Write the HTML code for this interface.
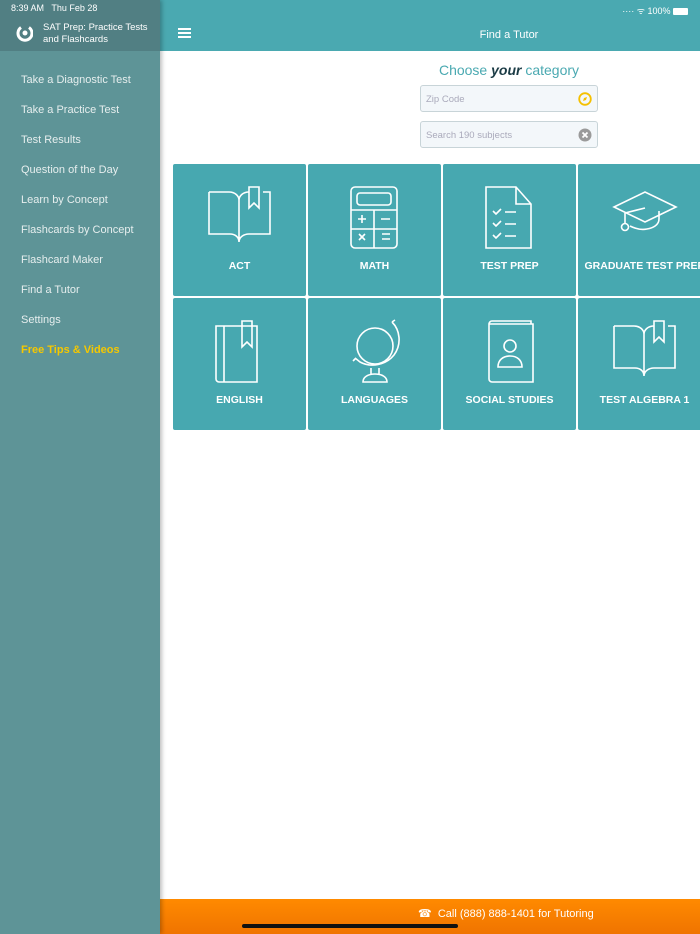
<!DOCTYPE html>
<html><head><meta charset="utf-8"><style>
*{margin:0;padding:0;box-sizing:border-box}
body{width:700px;height:934px;overflow:hidden;background:#fff;font-family:"Liberation Sans",sans-serif;position:relative}
#side{position:absolute;left:0;top:0;width:160px;height:934px;background:#5e9497;box-shadow:2px 0 4px rgba(0,0,0,.25);z-index:2}
#sidehead{height:51px;background:#517f83;position:relative}
#sidehead .t{position:absolute;left:11px;top:3px;font-size:9px;color:#fff}
#sidehead .n{position:absolute;left:43px;top:22px;font-size:9.5px;line-height:12px;color:#fff}
#side ul{list-style:none;padding-left:21px;margin-top:23px}
#side li{font-size:11px;color:#e6eeee;height:30px}
#side li.y{color:#f5c800;font-weight:bold}
#top{position:absolute;left:160px;top:0;right:0;height:51px;background:#4aa9b1}
#top .h{position:absolute;top:35px;left:349px;transform:translate(-50%,-50%);color:#fff;font-size:11px;white-space:nowrap}
.ham{position:absolute;left:18px;top:28px;width:13px;height:2px;background:#fff;box-shadow:0 4px 0 #fff,0 8px 0 #fff}
#stat{position:absolute;right:12px;top:4px;font-size:9px;color:#fff}
h2{position:absolute;left:420px;width:178px;top:62px;text-align:center;font-weight:normal;font-size:14px;color:#4aa9b1}
h2 b{color:#1b3b45;font-style:italic}
.in{position:absolute;left:420px;width:178px;height:27px;border:1px solid #c8d4d8;border-radius:3px;background:#f3f7fa;font-size:9.5px;color:#aab;padding:8px 0 0 5px}
.tile{position:absolute;width:133px;height:132px;background:#47a8b0;border-radius:2px;color:#fff;text-align:center}
.tile svg{position:absolute;left:33px;top:20px}
.tile span{position:absolute;top:96px;left:0;right:0;font-size:10.5px;font-weight:bold;white-space:nowrap}
#bot{position:absolute;left:160px;right:0;top:899px;height:35px;background:linear-gradient(#ff8a00,#f07400);color:#fff;font-size:11px}
#bot span{position:absolute;left:258px;top:8px}
#bar{position:absolute;left:242px;top:924px;width:216px;height:4px;border-radius:2px;background:#111;z-index:3}
</style></head><body>
<div id="side">
 <div id="sidehead"><div class="t">8:39 AM &nbsp; Thu Feb 28</div>
 <svg style="position:absolute;left:16px;top:25px" width="17" height="17" viewBox="0 0 17 17"><path d="M5 2.5A7 7 0 1 0 13 2.5" fill="none" stroke="#fff" stroke-width="3"/><circle cx="9" cy="8" r="2.5" fill="#fff"/></svg>
 <div class="n">SAT Prep: Practice Tests<br>and Flashcards</div></div>
 <ul><li>Take a Diagnostic Test</li><li>Take a Practice Test</li><li>Test Results</li><li>Question of the Day</li><li>Learn by Concept</li><li>Flashcards by Concept</li><li>Flashcard Maker</li><li>Find a Tutor</li><li>Settings</li><li class="y">Free Tips &amp; Videos</li></ul>
</div>
<div id="top"><div class="ham"></div><div class="h">Find a Tutor</div><div id="stat">···· ᯤ 100% <span style="display:inline-block;width:15px;height:7px;background:#fff;border-radius:1px;vertical-align:-1px"></span></div></div>
<h2>Choose <b>your</b> category</h2>
<div class="in" style="top:85px">Zip Code<svg style="position:absolute;right:5px;top:6px" width="14" height="14"><circle cx="7" cy="7" r="5.8" fill="none" stroke="#f5c000" stroke-width="1.8"/><path d="M9 5L6 6 5 9 8 8z" fill="#f5c000"/></svg></div>
<div class="in" style="top:121px">Search 190 subjects<svg style="position:absolute;right:5px;top:6px" width="14" height="14"><circle cx="7" cy="7" r="6.5" fill="#9a9a9a"/><path d="M4.5 4.5l5 5M9.5 4.5l-5 5" stroke="#fff" stroke-width="1.8"/></svg></div>

<div class="tile" style="left:173px;top:164px"><svg width="68" height="68" viewBox="0 0 68 68" fill="none" stroke="#fff" stroke-width="1.6"><path d="M3 8h20c6 0 10 4 10 8v42M3 8v42h21c5 0 9 3 9 8M33 16c0-4 4-8 10-8M57 8h7v42H43c-5 0-10 3-10 8"/><path d="M43 3v21l5-5 5 5V3z"/></svg><span>ACT</span></div>
<div class="tile" style="left:308px;top:164px"><svg width="68" height="68" viewBox="0 0 68 68" fill="none" stroke="#fff" stroke-width="1.6"><rect x="10" y="3" width="46" height="61" rx="4"/><rect x="16" y="9" width="34" height="12" rx="3"/><path d="M10 26h46M10 45h46M33 26v38M17 35h8M21 31v8M40 35h9M18 50l6 6M24 50l-6 6M41 50h8M41 55h8"/></svg><span>MATH</span></div>
<div class="tile" style="left:443px;top:164px"><svg width="68" height="68" viewBox="0 0 68 68" fill="none" stroke="#fff" stroke-width="1.6"><path d="M10 3h30l15 17v44H10zM40 3v17h15M17 27l3 3 5-5M17 39l3 3 5-5M17 51l3 3 5-5M29 28h11M29 40h11M29 52h11"/></svg><span>TEST PREP</span></div>
<div class="tile" style="left:578px;top:164px"><svg width="68" height="68" viewBox="0 0 68 68" fill="none" stroke="#fff" stroke-width="1.6"><path d="M3 23l31-15 31 15-31 15zM14 29v11M14 29l20-5M19 42c6 3 12 4 17 3 6-1 12-4 12-10v-8"/><circle cx="14" cy="43" r="3.5"/></svg><span>GRADUATE TEST PREP</span></div>

<div class="tile" style="left:173px;top:298px"><svg width="68" height="68" viewBox="0 0 68 68" fill="none" stroke="#fff" stroke-width="1.6"><path d="M10 8h41v56H13a3 3 0 0 1-3-3zM18 8v56M13 8"/><path d="M36 3v26l5-5 5 5V3z"/></svg><span>ENGLISH</span></div>
<div class="tile" style="left:308px;top:298px"><svg width="68" height="68" viewBox="0 0 68 68" fill="none" stroke="#fff" stroke-width="1.6"><circle cx="34" cy="28" r="18"/><path d="M51 4c8 8 10 22 2 33-8 10-23 13-34 7l-5-4M51 4l3-2M15 40l-3 3M30 50v6M38 50v6M22 64c0-5 5-8 12-8s12 3 12 8z"/></svg><span>LANGUAGES</span></div>
<div class="tile" style="left:443px;top:298px"><svg width="68" height="68" viewBox="0 0 68 68" fill="none" stroke="#fff" stroke-width="1.6"><path d="M13 6h44v58H16a3 3 0 0 1-3-3zM13 6a3 3 0 0 1 3-3h39v3"/><circle cx="34" cy="28" r="6"/><path d="M22 49c0-7 5-11 12-11s12 4 12 11z"/></svg><span>SOCIAL STUDIES</span></div>
<div class="tile" style="left:578px;top:298px"><svg width="68" height="68" viewBox="0 0 68 68" fill="none" stroke="#fff" stroke-width="1.6"><path d="M3 8h20c6 0 10 4 10 8v42M3 8v42h21c5 0 9 3 9 8M33 16c0-4 4-8 10-8M57 8h7v42H43c-5 0-10 3-10 8"/><path d="M43 3v21l5-5 5 5V3z"/></svg><span>TEST ALGEBRA 1</span></div>

<div id="bot"><span>☎ &nbsp;Call (888) 888-1401 for Tutoring</span></div>
<div id="bar"></div>
</body></html>
